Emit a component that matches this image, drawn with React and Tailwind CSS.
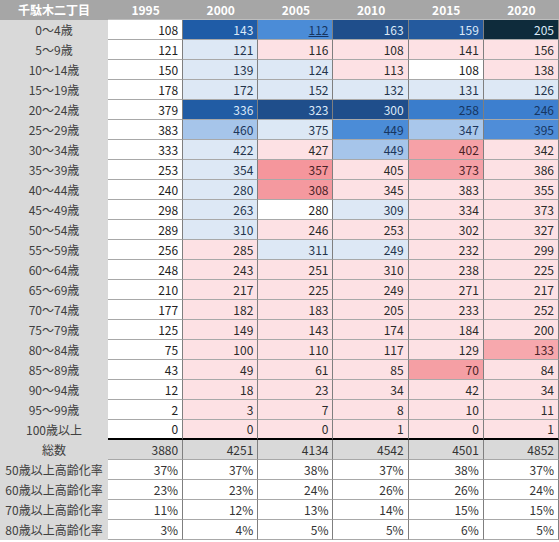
const rows = [
  ['0～4歳', [108, 143, 112, 163, 159, 205]],
  ['5～9歳', [121, 121, 116, 108, 141, 156]],
  ['10～14歳', [150, 139, 124, 113, 108, 138]],
  ['15～19歳', [178, 172, 152, 132, 131, 126]],
  ['20～24歳', [379, 336, 323, 300, 258, 246]],
  ['25～29歳', [383, 460, 375, 449, 347, 395]],
  ['30～34歳', [333, 422, 427, 449, 402, 342]],
  ['35～39歳', [253, 354, 357, 405, 373, 386]],
  ['40～44歳', [240, 280, 308, 345, 383, 355]],
  ['45～49歳', [298, 263, 280, 309, 334, 373]],
  ['50～54歳', [289, 310, 246, 253, 302, 327]],
  ['55～59歳', [256, 285, 311, 249, 232, 299]],
  ['60～64歳', [248, 243, 251, 310, 238, 225]],
  ['65～69歳', [210, 217, 225, 249, 271, 217]],
  ['70～74歳', [177, 182, 183, 205, 233, 252]],
  ['75～79歳', [125, 149, 143, 174, 184, 200]],
  ['80～84歳', [75, 100, 110, 117, 129, 133]],
  ['85～89歳', [43, 49, 61, 85, 70, 84]],
  ['90～94歳', [12, 18, 23, 34, 42, 34]],
  ['95～99歳', [2, 3, 7, 8, 10, 11]],
  ['100歳以上', [0, 0, 0, 1, 0, 1]],
]

const totals = [3880, 4251, 4134, 4542, 4501, 4852]

const rates = [
  ['50歳以上高齢化率', [37, 37, 38, 37, 38, 37]],
  ['60歳以上高齢化率', [23, 23, 24, 26, 26, 24]],
  ['70歳以上高齢化率', [11, 12, 13, 14, 15, 15]],
  ['80歳以上高齢化率', [3, 4, 5, 5, 6, 5]],
]

// cell fills for 2000..2020 (1995 column is plain white)
const W = 'bg-white text-[#222]'
const P = 'bg-[#fde1e4] text-[#2a2a2a]'
const LB = 'bg-[#dde8f5] text-[#24344c]'
const R1 = 'bg-[#f6a1a7] text-[#4a2226]'
const R2 = 'bg-[#f5969c] text-[#4a2226]'
const R3 = 'bg-[#f4999f] text-[#4a2226]'
const MB = 'bg-[#a6c5ea] text-[#1c355a]'
const BL = 'bg-[#4b8cd7] text-[#163561]'
const D1 = 'bg-[#1f5ca7] text-[#dce9f8]'
const D2 = 'bg-[#1f4e8b] text-[#dce9f8]'

const fills = [
  [D1, BL + ' underline', D2, 'bg-[#245a9e] text-[#dce9f8]', 'bg-[#0e2b3b] text-[#dce9f8]'],
  [LB, P, P, P, P],
  [LB, LB, P, W, P],
  [LB, LB, LB, LB, LB],
  ['bg-[#215ca4] text-[#dce9f8]', D2, D2, 'bg-[#3a7dcc] text-[#163561]', 'bg-[#3d7fcf] text-[#163561]'],
  [MB, 'bg-[#dce8f5] text-[#24344c]', BL, 'bg-[#a9c7eb] text-[#1c355a]', 'bg-[#4f8dd8] text-[#163561]'],
  [LB, P, MB, R1, P],
  [LB, R2, P, 'bg-[#f5a0a6] text-[#4a2226]', P],
  [LB, R3, P, P, P],
  [LB, W, LB, P, P],
  [LB, P, P, P, P],
  [P, LB, LB, P, P],
  [P, P, P, P, P],
  [P, P, P, P, P],
  [P, P, P, P, P],
  [P, P, P, P, P],
  [P, P, P, P, 'bg-[#f7a8ad] text-[#4a2226]'],
  [P, P, P, 'bg-[#f59fa4] text-[#4a2226]', P],
  [P, P, P, P, P],
  [P, P, P, P, P],
  [P, P, P, P, P],
]

const years = ['1995', '2000', '2005', '2010', '2015', '2020']

function Label({ children }) {
  return (
    <div className="h-[20px] flex items-center justify-center bg-[#d9d9d9] text-[#404040] whitespace-nowrap">
      {children}
    </div>
  )
}

function Num({ value, fill, extra = '' }) {
  return (
    <div className={`h-[20px] flex items-center justify-end pr-[4px] border-b border-r border-b-[#a8a8a8] border-r-[#7f7f7f] ${fill} ${extra}`}>
      {value}
    </div>
  )
}

export default function App() {
  return (
    <main
      className="w-[559px] h-[542px] bg-white text-[12px] leading-none overflow-hidden"
      style={{ fontFamily: '"Noto Sans CJK JP", "Noto Sans", sans-serif' }}
    >
      <div className="grid grid-cols-[108px_repeat(6,1fr)]">
        {/* header */}
        <div className="h-[20px] flex items-center justify-center bg-[#a6a6a6] text-white font-bold">
          千駄木二丁目
        </div>
        {years.map((y) => (
          <div key={y} className="h-[20px] flex items-center justify-center bg-[#a6a6a6] text-white font-bold border-b border-[#bdbdbd]">
            {y}
          </div>
        ))}

        {/* age rows */}
        {rows.map(([label, vals], i) => (
          <div key={label} className="contents">
            <Label>{label}</Label>
            {vals.map((v, j) => (
              <Num
                key={j}
                value={v}
                fill={j === 0 ? W : fills[i][j - 1]}
                extra={i === rows.length - 1 ? 'border-b-2 border-b-black' : ''}
              />
            ))}
          </div>
        ))}

        {/* totals */}
        <Label>総数</Label>
        {totals.map((v, j) => (
          <Num key={j} value={v} fill="bg-[#d9d9d9] text-[#333]" />
        ))}

        {/* ageing rates */}
        {rates.map(([label, vals]) => (
          <div key={label} className="contents">
            <Label>{label}</Label>
            {vals.map((v, j) => (
              <Num key={j} value={`${v}%`} fill="bg-white text-[#333]" />
            ))}
          </div>
        ))}
      </div>
    </main>
  )
}
